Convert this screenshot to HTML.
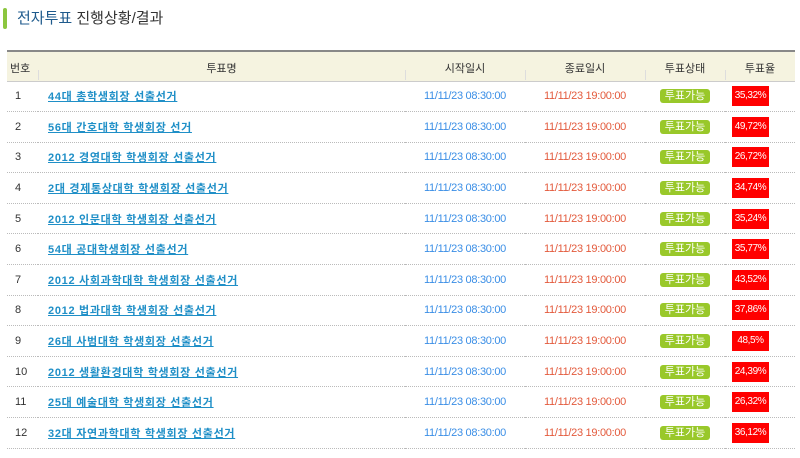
<!DOCTYPE html>
<html><head><meta charset="utf-8"><style>
body{margin:0;background:#fff;width:800px;height:458px;overflow:hidden;font-family:"Liberation Sans","Noto Sans CJK KR","NanumGothic",sans-serif;font-size:11px;color:#333}
.bar{position:absolute;left:3px;top:8px;width:4px;height:21px;background:#8cc63f;border-radius:2px}
.title{position:absolute;left:17px;top:9px;font-size:15px;color:#333;line-height:20px}
.title b{font-weight:normal;color:#1e5a8c}
table{position:absolute;left:7px;top:50px;width:788px;border-collapse:collapse;table-layout:fixed}
thead th{background:#f5f3e0;height:30px;border-top:2px solid #888;border-bottom:1px solid #ccc;font-weight:normal;font-size:11px;color:#333;padding:0;position:relative;vertical-align:top;padding-top:8px;box-sizing:border-box}
thead th:before{content:"";position:absolute;left:0;top:18px;height:10px;border-left:1px solid #ddd}
thead th:first-child:before{display:none}
td{height:30.6px;border-bottom:1px dotted #bbb;padding:0;text-align:center;box-sizing:border-box;vertical-align:middle}
td.n{text-align:left;padding-left:10px}
td.n a{color:#1f8fc7;font-weight:bold;text-decoration:underline;letter-spacing:0.7px}
td.s{color:#3a8ee6;letter-spacing:-0.3px}
td.e{color:#e35a3c;letter-spacing:-0.3px}
.bd{display:inline-block;vertical-align:middle;width:50px;height:14px;line-height:14px;background:#99c82a;color:#fff;border-radius:3px;font-size:11px}
td.r{text-align:left;padding-left:0}
.rb{display:inline-block;vertical-align:middle;margin-left:7px;width:37px;height:20px;line-height:20px;background:#ff0000;color:#fff;text-align:center;font-size:10px;letter-spacing:-0.4px;white-space:nowrap;overflow:hidden}
td.no{text-align:left;padding-left:8px}
</style></head><body>
<div class="bar"></div>
<div class="title"><b>전자투표</b> 진행상황/결과</div>
<table>
<colgroup><col style="width:31px"><col style="width:367px"><col style="width:120px"><col style="width:120px"><col style="width:80px"><col style="width:70px"></colgroup>
<thead><tr><th style="text-align:left;padding-left:3px">번호</th><th>투표명</th><th>시작일시</th><th>종료일시</th><th>투표상태</th><th>투표율</th></tr></thead>
<tbody>
<tr><td class="no">1</td><td class="n"><a>44대 총학생회장 선출선거</a></td><td class="s">11/11/23 08:30:00</td><td class="e">11/11/23 19:00:00</td><td><span class="bd">투표가능</span></td><td class="r"><span class="rb">35,32%</span></td></tr>
<tr><td class="no">2</td><td class="n"><a>56대 간호대학 학생회장 선거</a></td><td class="s">11/11/23 08:30:00</td><td class="e">11/11/23 19:00:00</td><td><span class="bd">투표가능</span></td><td class="r"><span class="rb">49,72%</span></td></tr>
<tr><td class="no">3</td><td class="n"><a>2012 경영대학 학생회장 선출선거</a></td><td class="s">11/11/23 08:30:00</td><td class="e">11/11/23 19:00:00</td><td><span class="bd">투표가능</span></td><td class="r"><span class="rb">26,72%</span></td></tr>
<tr><td class="no">4</td><td class="n"><a>2대 경제통상대학 학생회장 선출선거</a></td><td class="s">11/11/23 08:30:00</td><td class="e">11/11/23 19:00:00</td><td><span class="bd">투표가능</span></td><td class="r"><span class="rb">34,74%</span></td></tr>
<tr><td class="no">5</td><td class="n"><a>2012 인문대학 학생회장 선출선거</a></td><td class="s">11/11/23 08:30:00</td><td class="e">11/11/23 19:00:00</td><td><span class="bd">투표가능</span></td><td class="r"><span class="rb">35,24%</span></td></tr>
<tr><td class="no">6</td><td class="n"><a>54대 공대학생회장 선출선거</a></td><td class="s">11/11/23 08:30:00</td><td class="e">11/11/23 19:00:00</td><td><span class="bd">투표가능</span></td><td class="r"><span class="rb">35,77%</span></td></tr>
<tr><td class="no">7</td><td class="n"><a>2012 사회과학대학 학생회장 선출선거</a></td><td class="s">11/11/23 08:30:00</td><td class="e">11/11/23 19:00:00</td><td><span class="bd">투표가능</span></td><td class="r"><span class="rb">43,52%</span></td></tr>
<tr><td class="no">8</td><td class="n"><a>2012 법과대학 학생회장 선출선거</a></td><td class="s">11/11/23 08:30:00</td><td class="e">11/11/23 19:00:00</td><td><span class="bd">투표가능</span></td><td class="r"><span class="rb">37,86%</span></td></tr>
<tr><td class="no">9</td><td class="n"><a>26대 사범대학 학생회장 선출선거</a></td><td class="s">11/11/23 08:30:00</td><td class="e">11/11/23 19:00:00</td><td><span class="bd">투표가능</span></td><td class="r"><span class="rb">48,5%</span></td></tr>
<tr><td class="no">10</td><td class="n"><a>2012 생활환경대학 학생회장 선출선거</a></td><td class="s">11/11/23 08:30:00</td><td class="e">11/11/23 19:00:00</td><td><span class="bd">투표가능</span></td><td class="r"><span class="rb">24,39%</span></td></tr>
<tr><td class="no">11</td><td class="n"><a>25대 예술대학 학생회장 선출선거</a></td><td class="s">11/11/23 08:30:00</td><td class="e">11/11/23 19:00:00</td><td><span class="bd">투표가능</span></td><td class="r"><span class="rb">26,32%</span></td></tr>
<tr><td class="no">12</td><td class="n"><a>32대 자연과학대학 학생회장 선출선거</a></td><td class="s">11/11/23 08:30:00</td><td class="e">11/11/23 19:00:00</td><td><span class="bd">투표가능</span></td><td class="r"><span class="rb">36,12%</span></td></tr>
</tbody></table>
</body></html>
